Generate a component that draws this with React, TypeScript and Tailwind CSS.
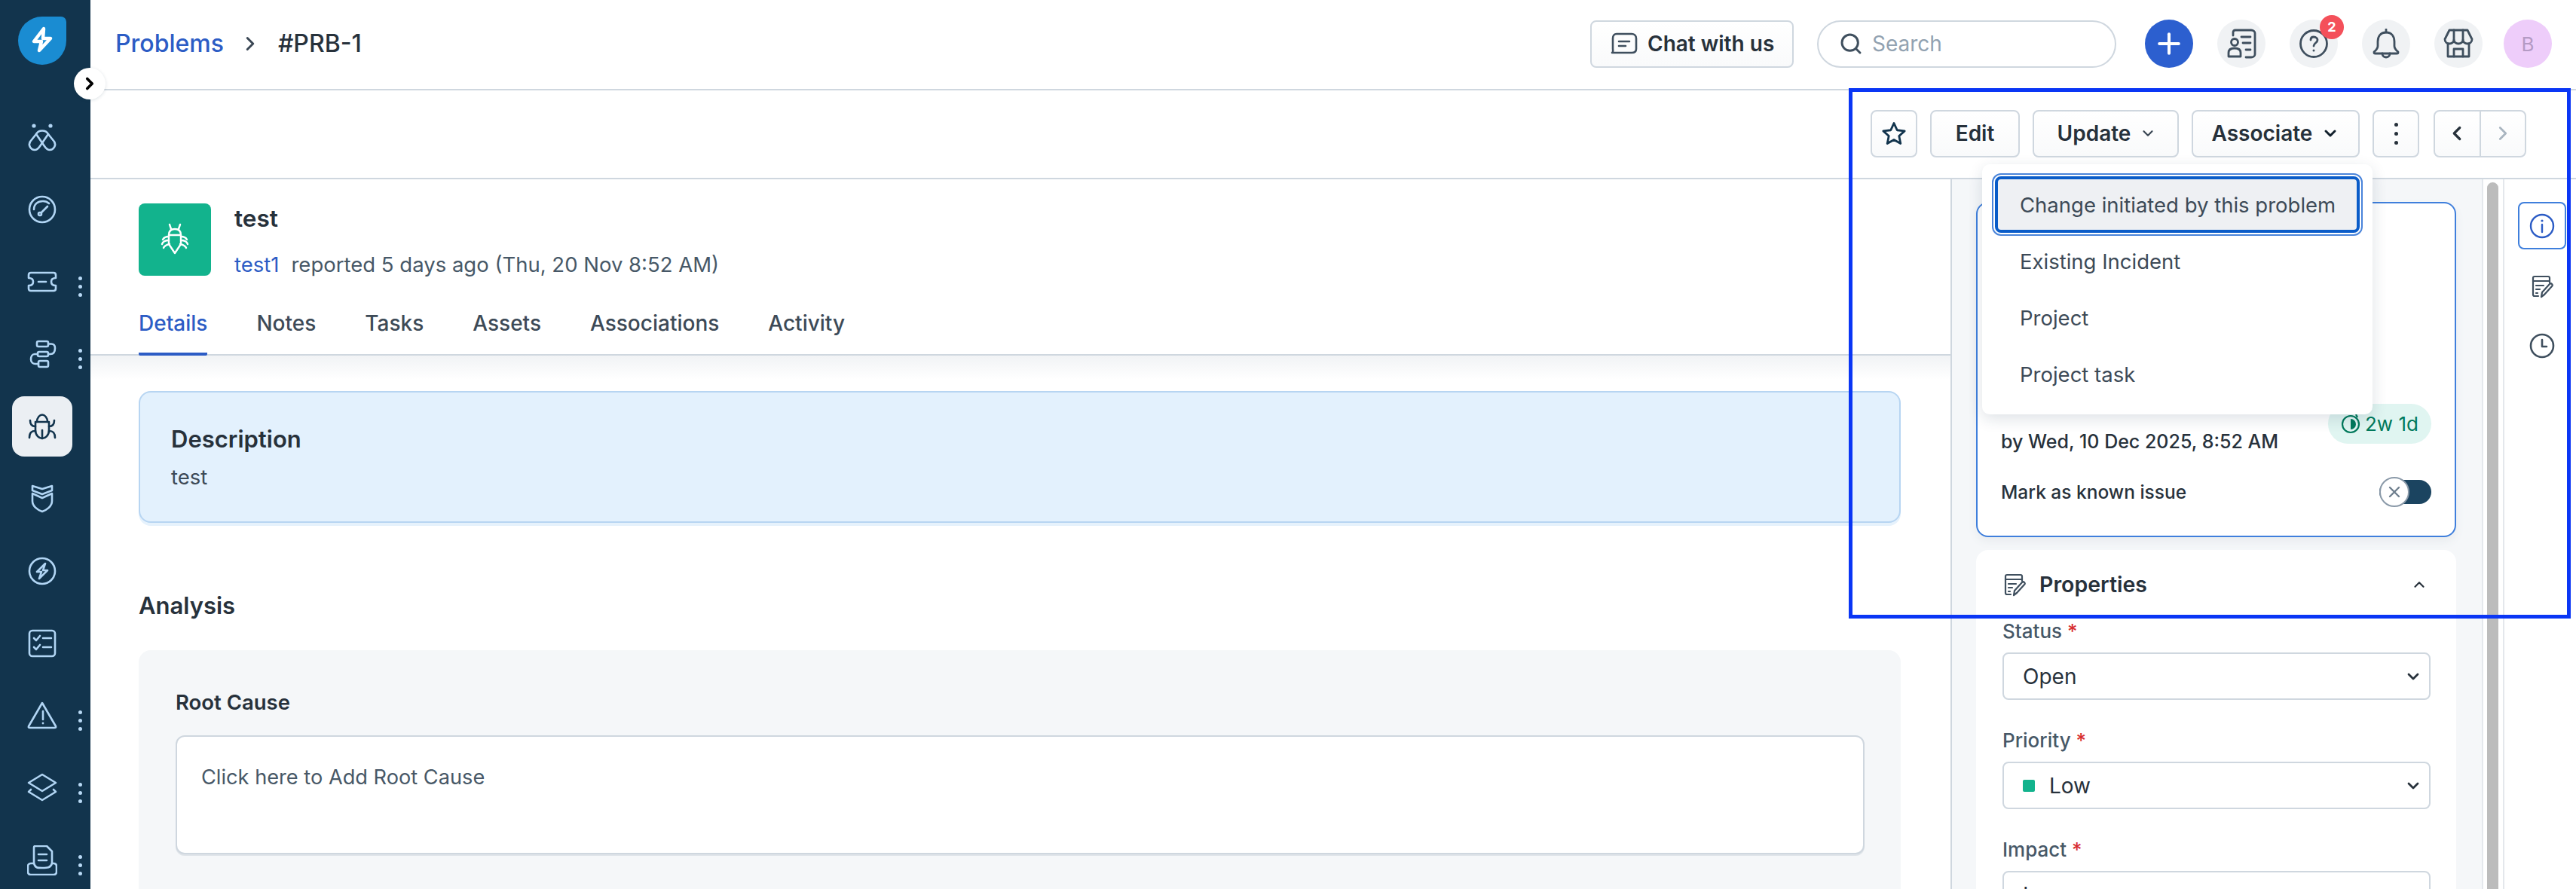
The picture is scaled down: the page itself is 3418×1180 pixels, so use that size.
import { ChevronDown, ChevronLeft, ChevronRight, ChevronUp, Plus, Search } from "lucide-react";
import type { ReactNode } from "react";

const navItems: { icon: ReactNode; dots?: boolean; active?: boolean }[] = [
  {
    icon: (
      <>
        <circle cx="9" cy="5" r="2.6" fill="currentColor" stroke="none" />
        <circle cx="31" cy="5" r="2.6" fill="currentColor" stroke="none" />
        <path d="M12 16 C15 10 25 10 28 16 L36 26 C39 31 35 37 30 37 C27 37 25 35 23 32 L12 16" />
        <path d="M28 16 L17 32 C15 35 13 37 10 37 C5 37 1 31 4 26 L12 16" />
      </>
    ),
  },
  {
    icon: (
      <>
        <circle cx="20" cy="20" r="17" />
        <path d="M9 20 C9 13 14 9 21 9 C24 9 27 10 29 12" />
        <circle cx="17" cy="26" r="2" />
        <path d="M19 24 L27 16" />
      </>
    ),
  },
  {
    dots: true,
    icon: (
      <>
        <path d="M5 8 H35 C37 8 38 9 38 11 V15 C34 15 32 17 32 20 C32 23 34 25 38 25 V29 C38 31 37 32 35 32 H5 C3 32 2 31 2 29 V25 C6 25 8 23 8 20 C8 17 6 15 2 15 V11 C2 9 3 8 5 8 Z" />
        <path d="M15 20 H25" />
      </>
    ),
  },
  {
    dots: true,
    icon: (
      <>
        <rect x="13" y="3" width="15" height="7" rx="2" />
        <rect x="14" y="17" width="14" height="6" rx="2" />
        <rect x="15" y="29" width="13" height="8" rx="2" />
        <path d="M28 6.5 H32 C36 6.5 37 9 37 12 C37 17 35 20 31 20 H28" />
        <path d="M14 20 H10 C7 20 5 23 5 27 C5 31 8 33 11 33 H15" />
      </>
    ),
  },
  {
    active: true,
    icon: (
      <>
        <path d="M13 14 C13 8 17 4.5 20 4.5 C23 4.5 27 8 27 14" />
        <path d="M11 14 H29 V25 C29 32 24 36 20 36 C16 36 11 32 11 25 Z" />
        <path d="M20 25 V36" />
        <path d="M11 20 C6 20 4 17 4 12 M29 20 C34 20 36 17 36 12" />
        <path d="M11 26 C6 26 3 28 3 35 M29 26 C34 26 37 28 37 35" />
      </>
    ),
  },
  {
    icon: (
      <>
        <path d="M7 3 L20 7 L33 3 V9 L20 14 L7 9 Z" />
        <path d="M7 13 L20 19 L33 13 V23 C33 30 26 35 20 37 C14 35 7 30 7 23 Z" />
      </>
    ),
  },
  {
    icon: (
      <>
        <circle cx="20" cy="20" r="17" />
        <path d="M24 10 L13 21 L19 21 L16 30 L27 19 L21 19 Z" />
      </>
    ),
  },
  {
    icon: (
      <>
        <rect x="3" y="3" width="34" height="34" rx="4" />
        <path d="M9 13 L12 16 L17 10 M9 25 L12 28 L17 22" />
        <path d="M21 13 H32 M21 25 H32" />
      </>
    ),
  },
  {
    dots: true,
    icon: (
      <>
        <path d="M20 3 L38 34 C38.500 35.500 38 36 36 36 H4 C2 36 1.500 35.500 2 34 Z" />
        <path d="M21 14 V25" />
        <circle cx="21" cy="30" r="1.400" fill="currentColor" stroke="none" />
      </>
    ),
  },
  {
    dots: true,
    icon: (
      <>
        <path d="M20 2 L38 13 L20 24 L2 13 Z" />
        <path d="M5 22 L2 25 L20 36 L38 25 L35 22" />
      </>
    ),
  },
  {
    dots: true,
    icon: (
      <>
        <path d="M9 24 V3 C9 1.800 10 1 11 1 H26 L33 8 V24" />
        <path d="M15 12 H26 M15 20 H26" />
        <path d="M9 24 H5 C2 24 1 26 1 28 V35 C1 38 3 39 5 39 H35 C37 39 39 38 39 35 V28 C39 26 38 24 35 24 H33 C31 30 27 30 20 30 C13 30 11 30 9 24 Z" />
      </>
    ),
  },
];

const NavIcon = ({ children, size = 40 }: { children: ReactNode; size?: number }) => (
  <svg
    width={size}
    height={size}
    viewBox="0 0 40 40"
    fill="none"
    stroke="currentColor"
    strokeWidth="2.600"
    strokeLinecap="round"
    strokeLinejoin="round"
  >
    {children}
  </svg>
);

const NoteEditIcon = ({ size = 32 }: { size?: number }) => (
  <svg width={size} height={size} viewBox="0 0 32 32" fill="none" stroke="currentColor" strokeWidth="2.200" strokeLinecap="round" strokeLinejoin="round">
    <path d="M11 29 H6 C4.500 29 4 28 4 27 V5 C4 3.500 5 3 6 3 H24 C25.500 3 26 4 26 5 V11" />
    <path d="M4 9 H26" />
    <path d="M8 15 H18 M8 20 H13 M8 25 H10" />
    <path d="M15 30 L16 24 L26 13 C27 12 28 12 29 13 C30 14 30 15 29 16 L19 27 Z" />
  </svg>
);

const Dots = () => (
  <div className="flex flex-col gap-[6px]">
    <span className="size-[5px] rounded-full bg-[#b8d9f5]" />
    <span className="size-[5px] rounded-full bg-[#b8d9f5]" />
    <span className="size-[5px] rounded-full bg-[#b8d9f5]" />
  </div>
);

const Sidebar = () => (
  <aside className="w-[120px] shrink-0 bg-[#12344d] text-[#b1d5f4]">
    <div className="h-[134px] pl-[24px] pt-[22px]">
      <div className="flex size-[64px] items-center justify-center rounded-[32px_7px_32px_32px] bg-[#1a8cd2]">
        <svg width="32" height="40" viewBox="0 0 32 40" fill="none" stroke="white" strokeWidth="4.500" strokeLinejoin="round">
          <path d="M18 4 L5 21 H15 L12 33 L27 17 H17 Z" />
        </svg>
      </div>
    </div>
    {navItems.map((item, i) => (
      <div key={i} className="flex h-[96px] items-center">
        <div
          className={`ml-[16px] flex size-[80px] items-center justify-center rounded-[16px] ${
            item.active ? "bg-[#ebeff3] text-[#12344d]" : ""
          }`}
        >
          <NavIcon>{item.icon}</NavIcon>
        </div>
        {item.dots && (
          <div className="ml-[8px] mt-[12px]">
            <Dots />
          </div>
        )}
      </div>
    ))}
  </aside>
);

const CircleBtn = ({ children }: { children: ReactNode }) => (
  <div className="relative flex size-[64px] items-center justify-center rounded-full bg-[#f0f2f4] text-[#3f4f5e]">
    {children}
  </div>
);

const TopBar = () => (
  <header className="flex h-[120px] shrink-0 items-center justify-between border-b-2 border-[#cfd7df] pb-[2px] pl-[33px] pr-[32px]">
    <div className="flex items-center text-[32px] font-medium leading-[40px]">
      <span className="text-[#2c5cc5]">Problems</span>
      <ChevronRight size={30} strokeWidth={2.400} className="ml-[20px] text-[#3a4754]" />
      <span className="ml-[22px] text-[#27313b]">#PRB-1</span>
    </div>
    <div className="flex items-center">
      <div className="flex h-[63px] w-[270px] items-center gap-[13px] rounded-[8px] border-2 border-[#cfd7df] bg-linear-to-b from-white to-[#f9fafb] pl-[25px]">
        <svg width="36" height="30" viewBox="0 0 36 30" fill="none" stroke="#3f4f5e" strokeWidth="2.600" strokeLinecap="round" strokeLinejoin="round">
          <path d="M8 2 H28 C31 2 34 4 34 8 V22 C34 25 32 27 28 27 H2 C4 26 3 24 3 21 V8 C3 4 5 2 8 2 Z" />
          <path d="M11 12 H25 M11 18 H20" />
        </svg>
        <span className="text-[28px] font-semibold leading-none text-[#27313b]">Chat with us</span>
      </div>
      <div className="ml-[31px] flex h-[63px] w-[397px] items-center gap-[12px] rounded-full border-2 border-[#cfd7df] bg-white pl-[27px]">
        <Search size={32} strokeWidth={2.200} className="text-[#3f4f5e]" />
        <span className="text-[28px] leading-none text-[#92a2b1]">Search</span>
      </div>
      <div className="ml-[38px] flex items-center gap-[32px]">
        <div className="flex size-[64px] items-center justify-center rounded-full bg-[#2c5fcf] text-white">
          <Plus size={44} strokeWidth={2.200} />
        </div>
        <CircleBtn>
          <svg width="40" height="40" viewBox="0 0 40 40" fill="none" stroke="currentColor" strokeWidth="2.800" strokeLinecap="round" strokeLinejoin="round">
            <path d="M9 9 V5 C9 3 10 2 12 2 H33 C36 2 38 4 38 6 V34 C38 36 36 38 33 38 H26" />
            <circle cx="11" cy="18" r="4.500" />
            <path d="M3 37 V32 C3 28 6 26 11 26 C16 26 19 28 19 32 V37 Z" />
            <path d="M20 11 H32 M22 19 H32 M26 28 H32" />
          </svg>
        </CircleBtn>
        <CircleBtn>
          <svg width="40" height="40" viewBox="0 0 40 40" fill="none" stroke="currentColor" strokeWidth="2.800" strokeLinecap="round" strokeLinejoin="round">
            <circle cx="20" cy="20" r="17.500" />
            <path d="M16 15 C16 12 18 11 20 11 C23 11 25 13 25 15 C25 19 20 19 20 23" />
            <circle cx="20" cy="29" r="1.500" fill="currentColor" stroke="none" />
          </svg>
          <span className="absolute right-[-8px] top-[-6px] flex size-[32px] items-center justify-center rounded-full bg-[#f4505a] text-[18px] font-bold leading-none text-white">
            2
          </span>
        </CircleBtn>
        <CircleBtn>
          <svg width="40" height="40" viewBox="0 0 40 40" fill="none" stroke="currentColor" strokeWidth="2.800" strokeLinecap="round" strokeLinejoin="round">
            <path d="M20 1 V5" />
            <path d="M20 5 C12 5 9 11 9 17 V23 C9 27 6 29 4 31 C4 33 4 33 6 33 H34 C36 33 36 33 36 31 C34 29 31 27 31 23 V17 C31 11 28 5 20 5 Z" />
            <path d="M15 33 C15 37 18 38 20 38 C22 38 25 37 25 33" />
          </svg>
        </CircleBtn>
        <CircleBtn>
          <svg width="40" height="40" viewBox="0 0 40 40" fill="none" stroke="currentColor" strokeWidth="2.800" strokeLinecap="round" strokeLinejoin="round">
            <path d="M8 2 H32 L38 14 C38 18 35 20 32 20 C29 20 26 18 26 15 C26 18 23 20 20 20 C17 20 14 18 14 15 C14 18 11 20 8 20 C5 20 2 18 2 14 Z" />
            <path d="M14 2 L14 15 M26 2 L26 15" />
            <path d="M6 20 V37 H34 V20" />
            <path d="M14 37 V27 H26 V37" />
          </svg>
        </CircleBtn>
        <div className="-ml-[4px] flex size-[64px] items-center justify-center rounded-full bg-[#eecdfa] text-[26px] text-[#b49ac4]">B</div>
      </div>
    </div>
  </header>
);

const ActionBtn = ({ className = "", children }: { className?: string; children: ReactNode }) => (
  <div
    className={`flex h-[63px] items-center justify-center rounded-[8px] border-2 border-[#cfd7df] bg-linear-to-b from-white to-[#f9fafb] text-[28px] font-semibold leading-none text-[#27313b] ${className}`}
  >
    {children}
  </div>
);

const ActionBar = () => (
  <div className="flex h-[118px] shrink-0 items-center justify-end gap-[17px] border-b-2 border-[#cfd7df] pb-[2px] pr-[66px]">
    <ActionBtn className="w-[62px]">
      <svg width="34" height="34" viewBox="0 0 24 24" fill="none" stroke="#12344d" strokeWidth="2" strokeLinejoin="round">
        <path d="M12 2.500 L15 9 L22 9.800 L16.800 14.500 L18.200 21.500 L12 18 L5.800 21.500 L7.200 14.500 L2 9.800 L9 9 Z" />
      </svg>
    </ActionBtn>
    <ActionBtn className="w-[119px]">Edit</ActionBtn>
    <ActionBtn className="w-[194px] gap-[12px] pl-[3px]">
      Update
      <ChevronDown size={22} strokeWidth={2.400} className="text-[#3a4754]" />
    </ActionBtn>
    <ActionBtn className="w-[223px] gap-[12px]">
      Associate
      <ChevronDown size={24} strokeWidth={3} className="text-[#12202c]" />
    </ActionBtn>
    <ActionBtn className="mr-[1px] w-[62px] flex-col gap-[7px]">
      <span className="size-[5px] rounded-full bg-[#27313b]" />
      <span className="size-[5px] rounded-full bg-[#27313b]" />
      <span className="size-[5px] rounded-full bg-[#27313b]" />
    </ActionBtn>
    <div className="ml-[1px] flex h-[63px] w-[123px] rounded-[8px] border-2 border-[#cfd7df] bg-linear-to-b from-white to-[#f9fafb]">
      <div className="flex flex-1 items-center justify-center border-r-2 border-[#cfd7df] text-[#27313b]">
        <ChevronLeft size={30} strokeWidth={2.600} />
      </div>
      <div className="flex flex-1 items-center justify-center text-[#a9b5c0]">
        <ChevronRight size={30} strokeWidth={2.200} />
      </div>
    </div>
  </div>
);

const tabs = ["Details", "Notes", "Tasks", "Assets", "Associations", "Activity"];

const MainColumn = () => (
  <div className="w-[2468px] shrink-0">
    <div className="flex h-[128px] pl-[64px] pt-[32px]">
      <div className="flex size-[96px] items-center justify-center rounded-[8px] bg-[#12b38d] text-white">
        <svg width="40" height="44" viewBox="0 0 40 44" fill="none" stroke="currentColor" strokeWidth="2.400" strokeLinecap="round" strokeLinejoin="round">
          <path d="M13 2 L15 8 M27 2 L25 8" />
          <path d="M12 16 C12 11 15 8 20 8 C25 8 28 11 28 16 V28 L20 40 L12 28 Z" />
          <path d="M12 16 H28" />
          <path d="M12 18 C7 18 5 20 4 22 M12 23 C7 23 4 25 3 28 M13 28 C9 29 6 30 5 33" />
          <path d="M28 18 C33 18 35 20 36 22 M28 23 C33 23 36 25 37 28 M27 28 C31 29 34 30 35 33" />
        </svg>
      </div>
      <div className="ml-[31px]">
        <div className="text-[31.500px] font-semibold leading-[40px] text-[#27313b]">test</div>
        <div className="mt-[23px] flex text-[27.500px] leading-[36px] text-[#475867]">
          <span className="text-[#2c5cc5]">test1</span>
          <span className="ml-[16px]">reported 5 days ago (Thu, 20 Nov 8:52 AM)</span>
        </div>
      </div>
    </div>
    <div className="flex h-[106px] gap-[65px] border-b-2 border-[#cfd7df] pl-[64px]">
      {tabs.map((t, i) => (
        <div
          key={t}
          className={`-mb-[2px] h-[106px] border-b-[4px] pt-[46px] text-[28px] font-medium leading-[34px] ${
            i === 0 ? "rounded-b-[2px] border-[#2c5cc5] text-[#2c5cc5]" : "border-transparent text-[#3d4a57]"
          }`}
        >
          {t}
        </div>
      ))}
    </div>
    <div className="bg-linear-to-b from-[#f1f3f5] to-white bg-[length:100%_32px] bg-no-repeat pl-[64px] pr-[66px] pt-[47px]">
      <div className="h-[175px] rounded-[16px] border-2 border-[#b7d5f2] bg-[#e3f1fd] pl-[41px] pt-[42px] shadow-[0_4px_0_#e6f2fc]">
        <div className="text-[31px] font-semibold leading-[40px] text-[#27313b]">Description</div>
        <div className="mt-[12px] text-[27.500px] leading-[36px] text-[#3d4a57]">test</div>
      </div>
      <div className="mt-[90px] text-[31px] font-semibold leading-[40px] text-[#27313b]">Analysis</div>
      <div className="mt-[39px] h-[400px] rounded-[16px] bg-[#f5f7f9] pl-[49px] pr-[48px] pt-[51px]">
        <div className="text-[27.500px] font-semibold leading-[36px] text-[#27313b]">Root Cause</div>
        <div className="mt-[26px] h-[158px] rounded-[12px] border-2 border-[#cfd7df] bg-white pl-[32px] pt-[36px] text-[27.200px] leading-[36px] text-[#475867] shadow-[0_2px_0_#dfe4e9]">
          Click here to Add Root Cause
        </div>
      </div>
    </div>
  </div>
);

const SelectBox = ({ label, value, square, mt }: { label: string; value: string; square?: boolean; mt: string }) => (
  <div className={mt}>
    <div className="text-[26px] font-medium leading-[34px] text-[#475867]">
      {label} <span className="text-[#d72d30]">*</span>
    </div>
    <div className="mt-[11px] flex h-[63px] items-center justify-between rounded-[8px] border-2 border-[#cfd7df] bg-white pl-[25px] pr-[9px]">
      <div className="flex items-center text-[28px] leading-[36px] text-[#27313b]">
        {square && <span className="mr-[19px] h-[16px] w-[16px] rounded-[2px] bg-[#12b38d]" />}
        {value}
      </div>
      <ChevronDown size={24} strokeWidth={2.800} className="text-[#27313b]" />
    </div>
  </div>
);

const RightPanel = () => (
  <div className="flex h-[942px] w-[705px] shrink-0 flex-col border-l-2 border-[#cfd7df] bg-[#f5f7f9] pl-[32px] pr-[34px] pt-[30px]">
    <div className="flex h-[445px] shrink-0 flex-col justify-end rounded-[16px] border-2 border-[#3f7fdc] bg-white px-[31px] pb-[41px] shadow-[0_6px_12px_#e9ecef]">
      <div className="flex items-end justify-between">
        <span className="text-[25px] font-medium leading-[34px] text-[#27313b]">by Wed, 10 Dec 2025, 8:52 AM</span>
        <span className="mb-[14px] flex h-[53px] w-[137px] items-center justify-center gap-[6px] rounded-full bg-[#e0f5f1] text-[26px] leading-none text-[#00795b]">
          <svg width="26" height="32" viewBox="0 0 26 32" fill="none" stroke="currentColor" strokeWidth="2.200">
            <path d="M13 5 A11 11 0 1 0 13 27 A11 11 0 0 0 13 5" />
            <path d="M13 9 A7 7 0 0 1 13 23 Z" fill="currentColor" stroke="none" />
            <path d="M20 3 L22 7" />
          </svg>
          2w 1d
        </span>
      </div>
      <div className="mt-[33px] flex items-center justify-between">
        <span className="text-[24.500px] font-medium leading-[34px] text-[#27313b]">Mark as known issue</span>
        <div className="relative h-[32px] w-[69px] rounded-full bg-[#1b4460]">
          <div className="absolute -top-[4px] left-0 flex size-[40px] items-center justify-center rounded-full border-2 border-[#8b9aa9] bg-white text-[#6f7f8e]">
            <svg width="18" height="18" viewBox="0 0 18 18" stroke="currentColor" strokeWidth="2.400" strokeLinecap="round">
              <path d="M3 3 L15 15 M15 3 L3 15" />
            </svg>
          </div>
        </div>
      </div>
    </div>
    <div className="mt-[17px] flex-1 rounded-t-[16px] bg-white pl-[35px] pr-[34px] pt-[30px]">
      <div className="flex h-[32px] items-center justify-between">
        <div className="flex items-center gap-[17px] text-[28.500px] font-semibold leading-none text-[#27313b]">
          <span className="text-[#3f4f5e]">
            <NoteEditIcon />
          </span>
          Properties
        </div>
        <ChevronUp size={22} strokeWidth={2.400} className="mr-[4px] text-[#27313b]" />
      </div>
      <SelectBox label="Status" value="Open" mt="mt-[29px]" />
      <SelectBox label="Priority" value="Low" square mt="mt-[37px]" />
      <SelectBox label="Impact" value="Low" mt="mt-[37px]" />
    </div>
  </div>
);

const ScrollGutter = () => (
  <div className="h-[942px] w-[30px] shrink-0 border-x-2 border-[#e4e8ec] pl-[5px] pt-[4px]">
    <div className="h-[938px] w-[15px] rounded-t-full bg-[#bcbcbc]" />
  </div>
);

const SideTabs = () => (
  <div className="flex flex-1 flex-col items-center pl-[4px] pt-[30px] text-[#3f4f5e]">
    <div className="flex h-[63px] w-[64px] items-center justify-center rounded-[8px] border-2 border-[#3f7fdc] text-[#2c5cc5]">
      <svg width="34" height="34" viewBox="0 0 34 34" fill="none" stroke="currentColor" strokeWidth="2.400" strokeLinecap="round">
        <circle cx="17" cy="17" r="15" />
        <path d="M17 15 V25" />
        <circle cx="17" cy="10" r="1.600" fill="currentColor" stroke="none" />
      </svg>
    </div>
    <div className="mt-[33px]">
      <NoteEditIcon />
    </div>
    <div className="mt-[46px]">
      <svg width="34" height="34" viewBox="0 0 34 34" fill="none" stroke="currentColor" strokeWidth="2.600" strokeLinecap="round" strokeLinejoin="round">
        <circle cx="17" cy="17" r="15" />
        <path d="M17 9 V18 H23" />
      </svg>
    </div>
  </div>
);

const menuItems = ["Change initiated by this problem", "Existing Incident", "Project", "Project task"];

const AssociateMenu = () => (
  <div className="absolute left-[2630px] top-[218px] w-[518px] rounded-[10px] bg-white px-[17px] py-[16px] shadow-[0_6px_20px_rgba(18,52,77,0.14)]">
    {menuItems.map((m, i) => (
      <div
        key={m}
        className={`flex h-[75px] items-center rounded-[8px] border-[4px] pl-[29px] pt-[2px] text-[27.500px] leading-none text-[#3d4a57] ${
          i === 0
            ? "border-[#0a5cc8] bg-[#eef0f3] outline-2 outline-offset-[2px] outline-[#4a84da]"
            : "border-transparent"
        }`}
      >
        {m}
      </div>
    ))}
  </div>
);

export default function App() {
  return (
    <div className="relative flex h-[1180px] w-[3418px] overflow-hidden bg-white font-[Inter,sans-serif]">
      <Sidebar />
      <div className="flex min-w-0 flex-1 flex-col">
        <TopBar />
        <ActionBar />
        <div className="flex flex-1">
          <MainColumn />
          <RightPanel />
          <ScrollGutter />
          <SideTabs />
        </div>
      </div>
      <div className="absolute left-[98px] top-[90px] flex size-[42px] items-center justify-center rounded-full bg-white shadow-[0_1px_4px_rgba(18,52,77,0.15)]">
        <ChevronRight size={26} strokeWidth={3.400} className="text-black" />
      </div>
      <AssociateMenu />
      <div className="pointer-events-none absolute left-[2453px] top-[117px] h-[704px] w-[958px] border-[5px] border-[#0a36f5]" />
    </div>
  );
}
